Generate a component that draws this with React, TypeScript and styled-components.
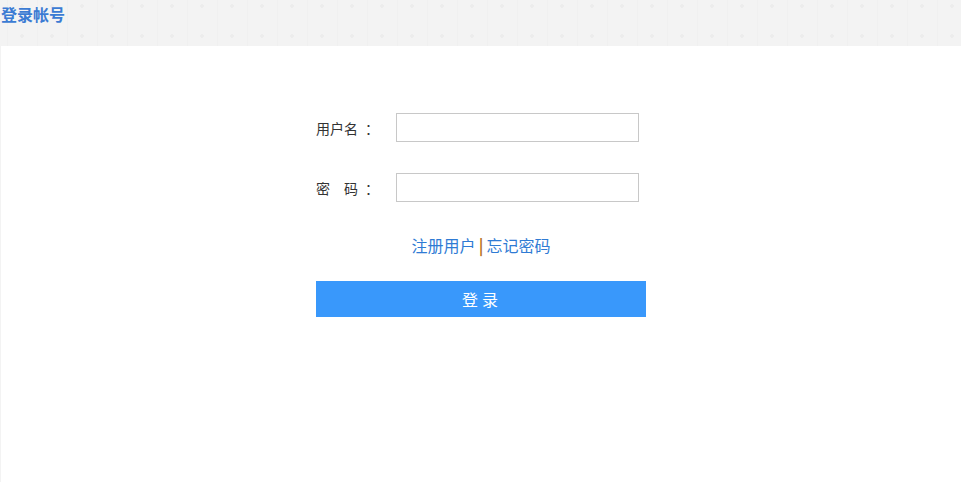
import styled, { createGlobalStyle } from 'styled-components';

const GlobalStyle = createGlobalStyle`
  html, body {
    margin: 0;
    padding: 0;
    height: 100%;
  }
  body {
    font-family: "Noto Sans CJK SC", "Noto Sans", "Liberation Sans", sans-serif;
    background-color: #f3f3f3;
    background-image:
      radial-gradient(circle, #ececec 1.5px, transparent 2px),
      linear-gradient(90deg, #f0f0f0 1px, transparent 1px);
    background-size: 30px 30px, 30px 30px;
    background-position: 7px -9px, 7px 0;
  }
  #root {
    height: 100%;
  }
`;

const Page = styled.div`
  display: flex;
  flex-direction: column;
  height: 100%;
`;

const Header = styled.div`
  height: 46px;
  flex-shrink: 0;
`;

const Title = styled.h2`
  margin: 0;
  padding: 3px 0 0 1px;
  font-size: 16px;
  font-weight: bold;
  line-height: 22px;
  color: #3b7bd3;
`;

const Panel = styled.div`
  flex: 1;
  margin-left: 1px;
  background: #fff;
`;

const Form = styled.form`
  width: 330px;
  margin: 0 auto;
  padding-top: 67px;
  display: flex;
  flex-direction: column;
`;

const Row = styled.div`
  display: flex;
  align-items: center;
  height: 29px;
  margin-bottom: 31px;
`;

const Label = styled.label`
  width: 80px;
  font-size: 14px;
  color: #333;
  white-space: pre;
`;

const Colon = styled.span`
  margin-left: 7px;
`;

const Input = styled.input`
  box-sizing: border-box;
  width: 243px;
  height: 29px;
  border: 1px solid #c8c8c8;
  outline: none;
  padding: 0 6px;
  font-size: 14px;
`;

const Links = styled.div`
  text-align: center;
  font-size: 16px;
  line-height: 20px;
  margin-top: 2px;
  color: #2f7bd4;
`;

const LinkText = styled.a`
  color: #2f7bd4;
  text-decoration: none;
  cursor: pointer;
`;

const Divider = styled.span`
  color: #b8731c;
  font-weight: bold;
  margin: 0 3px;
`;

const Submit = styled.button`
  margin-top: 26px;
  height: 36px;
  width: 330px;
  border: none;
  background: #3998fb;
  color: #fff;
  font-family: inherit;
  font-size: 16px;
  letter-spacing: 4px;
  padding-left: 8px;
  cursor: pointer;
`;

const App = () => {
  return (
    <>
      <GlobalStyle />
      <Page>
        <Header>
          <Title>登录帐号</Title>
        </Header>
        <Panel>
          <Form onSubmit={(e) => e.preventDefault()}>
            <Row>
              <Label>
                用户名<Colon>：</Colon>
              </Label>
              <Input type="text" />
            </Row>
            <Row>
              <Label>
                {'密\u2003码'}
                <Colon>：</Colon>
              </Label>
              <Input type="password" />
            </Row>
            <Links>
              <LinkText>注册用户</LinkText>
              <Divider>|</Divider>
              <LinkText>忘记密码</LinkText>
            </Links>
            <Submit type="submit">登录</Submit>
          </Form>
        </Panel>
      </Page>
    </>
  );
};

export default App;
